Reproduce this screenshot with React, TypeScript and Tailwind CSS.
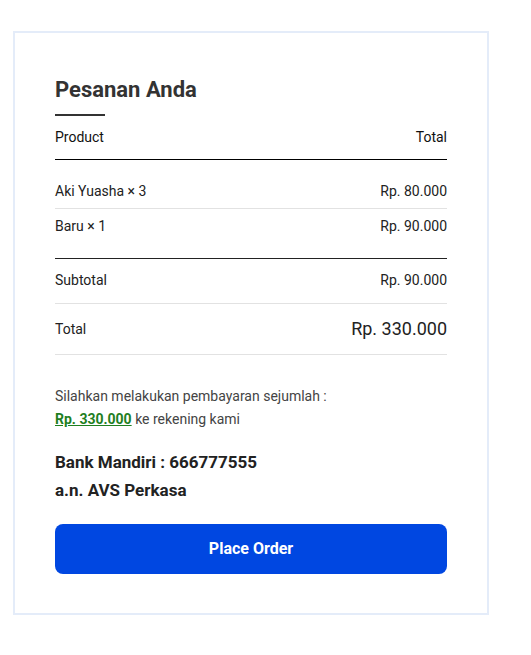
import React from 'react';

const items = [
  { name: 'Aki Yuasha', qty: 3, price: 'Rp. 80.000' },
  { name: 'Baru', qty: 1, price: 'Rp. 90.000' },
];

export default function App() {
  return (
    <div className="min-h-screen bg-white font-['Roboto',sans-serif] text-[#222]">
      <div className="ml-[13px] pt-[31px]">
        <div className="w-[476px] border-2 border-[#e4ecf9] px-[40px] pt-[43px] pb-[39px]">
          {/* Heading */}
          <h2 className="text-[22px] leading-[28px] font-bold text-[#333]">Pesanan Anda</h2>
          <div className="mt-[10px] h-[2px] w-[50px] bg-[#333]" />

          {/* Table header */}
          <div className="flex justify-between pt-[11px] pb-[12px] border-b border-black text-[14px] leading-5 text-[#111]">
            <span>Product</span>
            <span>Total</span>
          </div>

          {/* Items */}
          <div className="pt-[14px] pb-[15px] border-b border-[#222]">
            {items.map((item, i) => (
              <div
                key={i}
                className={`flex justify-between py-[7px] text-[14px] leading-5 ${
                  i < items.length - 1 ? 'border-b border-[#e2e2e2]' : ''
                }`}
              >
                <span>
                  {item.name} × {item.qty}
                </span>
                <span>{item.price}</span>
              </div>
            ))}
          </div>

          {/* Subtotal */}
          <div className="flex justify-between pt-[11px] pb-[13px] border-b border-[#e2e2e2] text-[14px] leading-5">
            <span>Subtotal</span>
            <span>Rp. 90.000</span>
          </div>

          {/* Total */}
          <div className="flex items-center justify-between py-[12px] border-b border-[#e2e2e2]">
            <span className="text-[14px] leading-5">Total</span>
            <span className="text-[18px] leading-[26px]">Rp. 330.000</span>
          </div>

          {/* Payment note */}
          <div className="mt-[30px] text-[14px] leading-[23px] text-[#444]">
            <p>Silahkan melakukan pembayaran sejumlah :</p>
            <p>
              <a href="#" className="font-bold text-[#1f7f1f] underline">
                Rp. 330.000
              </a>{' '}
              ke rekening kami
            </p>
          </div>

          <div className="mt-[17px] text-[17px] leading-[28px] font-bold text-[#222]">
            <p>Bank Mandiri : 666777555</p>
            <p>a.n. AVS Perkasa</p>
          </div>

          <button className="mt-[20px] h-[50px] w-full rounded-[8px] bg-[#0047e1] text-[16px] font-bold text-white">
            Place Order
          </button>
        </div>
      </div>
    </div>
  );
}
